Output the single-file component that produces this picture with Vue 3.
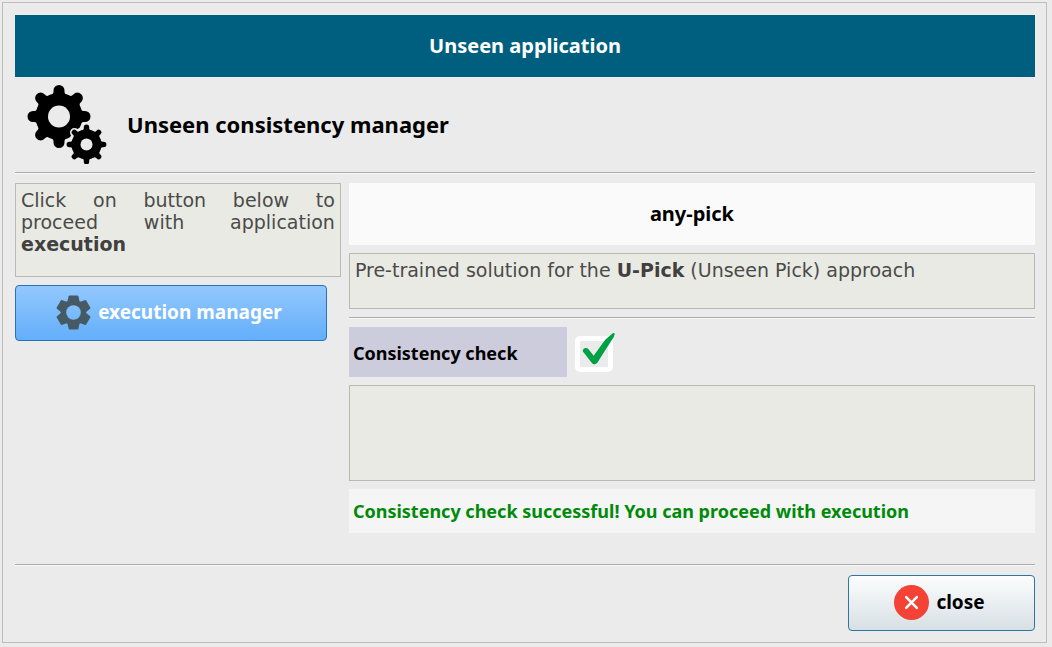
<script setup>
import { ref } from 'vue'

const consistent = ref(true)
const log = ref('')

const eightTeeth = [0, 45, 90, 135, 180, 225, 270, 315]
const sixTeeth = [0, 60, 120, 180, 240, 300]
</script>

<template>
  <main class="window">
    <header class="banner">Unseen application</header>

    <section class="heading">
      <svg class="gears" viewBox="0 0 80 80" aria-hidden="true">
        <defs>
          <mask id="big-mask">
            <rect width="80" height="80" fill="#fff" />
            <circle cx="32" cy="32.5" r="11" fill="#000" />
            <circle cx="59.5" cy="60.5" r="18" fill="#000" />
            <g stroke="#000" stroke-width="9" stroke-linecap="round">
              <path v-for="a in eightTeeth" :key="a" d="M59.5 48V43.5" :transform="`rotate(${a} 59.5 60.5)`" />
            </g>
          </mask>
          <mask id="small-mask">
            <rect width="80" height="80" fill="#fff" />
            <circle cx="59.5" cy="60.5" r="6" fill="#000" />
          </mask>
        </defs>
        <g mask="url(#big-mask)">
          <circle cx="32" cy="32.5" r="23.5" />
          <path v-for="a in eightTeeth" :key="a" d="M21 12.500Q26.500 10.500 26.500 8V6.500a5.500 5.500 0 0 1 11 0V8Q37.500 10.500 43 12.500Z" :transform="`rotate(${a} 32 32.5)`" />
        </g>
        <g mask="url(#small-mask)">
          <circle cx="59.5" cy="60.5" r="15" />
          <path v-for="a in eightTeeth" :key="a" d="M52.500 47.500Q56.800 46.500 56.800 44.500V43.300a2.700 2.700 0 0 1 5.400 0V44.500Q62.200 46.500 66.500 47.500Z" :transform="`rotate(${a} 59.5 60.5)`" />
        </g>
      </svg>
      <h1>Unseen consistency manager</h1>
    </section>

    <hr />

    <div class="columns">
      <section class="side">
        <p class="note tall">Click on button below to proceed with application <b>execution</b></p>
        <button type="button" class="btn primary">
          <svg class="icon" viewBox="0 0 36 36" aria-hidden="true">
            <defs>
              <mask id="cog-mask">
                <rect width="36" height="36" fill="#fff" />
                <circle cx="18" cy="18" r="7.500" fill="#000" />
              </mask>
            </defs>
            <g fill="#455a64" mask="url(#cog-mask)">
              <circle cx="18" cy="18" r="13" />
              <path v-for="a in sixTeeth" :key="a" d="M11.500 8L13 1Q13.200 .5 14 .5H22Q22.800 .5 23 1L24.500 8Z" :transform="`rotate(${a} 18 18)`" />
            </g>
          </svg>
          <span>execution manager</span>
        </button>
      </section>

      <section class="content">
        <h2>any-pick</h2>
        <p class="note">Pre-trained solution for the <b>U-Pick</b> (Unseen Pick) approach</p>
        <hr />
        <div class="check-row">
          <label for="consistency">Consistency check</label>
          <span class="tick">
            <input id="consistency" v-model="consistent" type="checkbox" />
            <svg v-if="consistent" viewBox="0 0 42 42" aria-hidden="true">
              <path d="M7.700 19Q8 16.500 10 16Q12 15.500 13.300 17L18.700 23.700L30 8L37.700 1.300Q39.500 .5 39.700 2Q39.500 4.500 36.700 8.300L28.300 21.300L22.700 30.300Q21 32.500 19.300 32.300Q17.800 32.200 16.700 30.700L9.300 21.300Q7.800 20 7.700 19Z" fill="#00a045" />
            </svg>
          </span>
        </div>
        <textarea v-model="log" class="log" aria-label="Consistency log" readonly></textarea>
        <p class="status" role="status">Consistency check successful! You can proceed with execution</p>
      </section>
    </div>

    <hr />

    <footer>
      <button type="button" class="btn plain">
        <svg class="icon" viewBox="0 0 36 36" aria-hidden="true">
          <circle cx="18" cy="18" r="18" fill="#f44336" />
          <path d="M12.500 12.500L23.500 23.500M23.500 12.500L12.500 23.500" stroke="#fff" stroke-width="2.600" stroke-linecap="round" />
        </svg>
        <span>close</span>
      </button>
    </footer>
  </main>
</template>

<style>
body {
  background: #ebebeb;
}
</style>

<style scoped>
* {
  box-sizing: border-box;
}

.window {
  margin: 2px 5px 4px 2px;
  padding: 12px 11px 11px 12px;
  border: 1px solid #bebebe;
  color: #000;
  font: bold 19px/24px "Noto Sans", sans-serif;
}

h1,
h2,
p {
  margin: 0;
}

.banner {
  display: flex;
  align-items: center;
  justify-content: center;
  height: 62px;
  background: #005f7f;
  color: #fff;
  font-size: 20px;
}

.heading {
  display: flex;
  align-items: center;
  gap: 20px;
  height: 95px;
  padding: 0 12px 2px;
}

.gears {
  width: 80px;
  height: 80px;
}

h1 {
  font-size: 22px;
  line-height: 28px;
}

hr {
  height: 2px;
  margin: 0;
  border: 0;
  border-top: 1px solid #ababab;
  background: #fafafa;
}

.columns {
  display: grid;
  grid-template-columns: 19fr 40fr;
  gap: 8px;
  padding: 9px 0 31px;
}

.side,
.content {
  display: flex;
  flex-direction: column;
  gap: 8px;
}

.note {
  min-height: 56px;
  padding: 5px;
  border: 1px solid #b9bab4;
  background: #e9eae3;
  color: #4a4a4a;
  font: 19px/22px "DejaVu Sans", sans-serif;
  text-align: justify;
}

.tall {
  min-height: 94px;
}

.note b {
  color: #404040;
}

.btn {
  display: flex;
  align-items: center;
  justify-content: center;
  gap: 7px;
  height: 56px;
  padding: 0 4px 2px 0;
  border-radius: 4px;
  font: inherit;
}

.icon {
  width: 35px;
  height: 35px;
}

.primary {
  margin-right: 14px;
  border: 1px solid #2574bd;
  background: linear-gradient(#93c8fd, #63aefb);
  color: #fff;
}

.plain {
  width: 187px;
  border: 1px solid #2b76a3;
  background: linear-gradient(#fcfdfd, #d7e0e5);
  color: #000;
}

h2 {
  padding: 19px 0;
  background: #fafafa;
  font-size: 20px;
  line-height: 24px;
  text-align: center;
}

.check-row {
  display: flex;
  gap: 8px;
  height: 50px;
  font-size: 18px;
}

.check-row label {
  display: flex;
  align-items: center;
  width: 218px;
  padding: 2px 0 0 4px;
  background: #cdccdc;
}

.tick {
  position: relative;
  width: 42px;
}

.tick input {
  appearance: none;
  width: 38px;
  height: 36px;
  margin: 9px 0 0;
  border: 5px solid #fff;
  border-radius: 5px;
  background: #ebebeb;
}

.tick svg {
  position: absolute;
  top: 5px;
  left: 0;
  width: 42px;
  height: 42px;
  pointer-events: none;
}

.log {
  width: 100%;
  height: 96px;
  padding: 5px;
  border: 1px solid #b9bab4;
  background: #e9eae3;
  color: #4a4a4a;
  font: 19px/22px "DejaVu Sans", sans-serif;
  resize: none;
}

.status {
  padding: 10px 4px;
  background: #f5f5f5;
  color: #008a0a;
  font-size: 18px;
}

footer {
  display: flex;
  justify-content: flex-end;
  padding-top: 9px;
}
</style>
